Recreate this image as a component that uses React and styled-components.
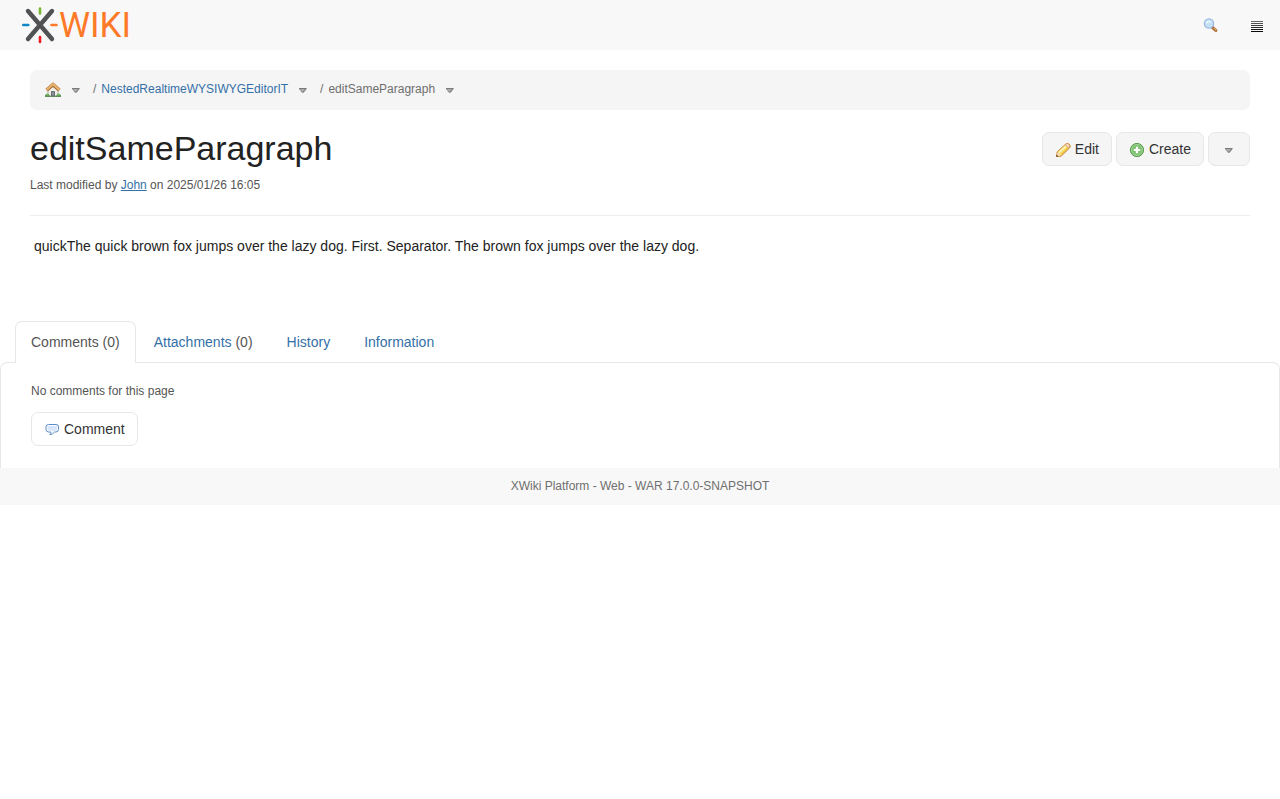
import React from "react";
import styled, { createGlobalStyle } from "styled-components";

const color = {
  bar: "#f8f8f8",
  button: "#f5f5f5",
  crumb: "#f5f5f5",
  border: "#e7e7e7",
  link: "#3470a8",
  muted: "#6f6f6f",
  soft: "#555",
  text: "#222",
};

const GlobalStyle = createGlobalStyle`
  *, *::before, *::after { box-sizing: border-box; }
  body {
    margin: 0;
    background: #fff;
    color: ${color.text};
    font: 14px/20px "Liberation Sans", Arial, sans-serif;
  }
`;

const Header = styled.header`
  display: flex;
  justify-content: space-between;
  height: 50px;
  background: ${color.bar};
`;
const LogoLink = styled.a`
  display: block;
  padding: 5px 20px;
  svg { display: block; }
`;
const HeaderActions = styled.nav`
  display: flex;
  gap: 4px;
  padding-right: 2px;
`;
const IconButton = styled.button`
  display: flex;
  align-items: center;
  justify-content: center;
  width: 42px;
  padding: 2px 0 0;
  border: 0;
  background: none;
  cursor: pointer;
`;

const Main = styled.main`
  padding: 20px 30px 0;
`;
const Breadcrumb = styled.ol`
  display: flex;
  align-items: center;
  gap: 13px;
  height: 40px;
  margin: 0;
  padding: 0 15px;
  list-style: none;
  border-radius: 7px;
  background: ${color.crumb};
  color: ${color.muted};
  font-size: 12px;
  line-height: 16px;
`;
const Crumb = styled.li`
  display: flex;
  align-items: center;
  gap: 11px;
`;
const CrumbText = styled.span`
  display: flex;
  gap: 5px;
  padding-bottom: 2px;
`;
const Link = styled.a`
  color: ${color.link};
  text-decoration: ${(p) => (p.$underline ? "underline" : "none")};
`;
const HomeLink = styled.a`
  display: flex;
`;
const CaretButton = styled.button`
  display: flex;
  padding: 1px 0 0;
  border: 0;
  background: none;
  cursor: pointer;
`;

const TitleRow = styled.div`
  display: flex;
  justify-content: space-between;
  align-items: flex-start;
  padding-top: 20px;
`;
const Title = styled.h1`
  margin: 0;
  font-size: 34px;
  font-weight: 400;
  line-height: 37px;
`;
const ButtonBar = styled.div`
  display: flex;
  gap: 4px;
  padding-top: 2px;
`;
const Button = styled.button`
  display: inline-flex;
  align-items: center;
  justify-content: center;
  gap: 4px;
  height: 34px;
  min-width: 42px;
  padding: 0 12px;
  border: 1px solid ${color.border};
  border-radius: 7px;
  background: ${(p) => (p.$plain ? "#fff" : color.button)};
  color: #333;
  font: inherit;
  cursor: pointer;
  svg { position: relative; top: 1px; }
`;
const Meta = styled.p`
  margin: 0;
  padding: 10px 0 21px;
  border-bottom: 1px solid #eee;
  color: ${color.soft};
  font-size: 12px;
  line-height: 17px;
`;
const Content = styled.article`
  min-height: 85px;
  margin-top: 20px;
  padding-left: 4px;
`;

const Tabs = styled.nav`
  display: flex;
  gap: 2px;
  padding: 0 15px;
`;
const Tab = styled.a`
  height: 42px;
  margin-bottom: -1px;
  padding: 10px 15px;
  border: 1px solid ${(p) => (p.$active ? color.border : "transparent")};
  border-bottom: 0;
  border-radius: 7px 7px 0 0;
  background: ${(p) => (p.$active ? "#fff" : "none")};
  color: ${(p) => (p.$active ? color.soft : color.link)};
  text-decoration: none;
  z-index: 1;
`;
const Count = styled.span`
  color: ${color.soft};
`;
const Pane = styled.section`
  padding: 20px 30px 22px;
  border: 1px solid ${color.border};
  border-bottom: 0;
  border-radius: 7px 7px 0 0;
`;
const Empty = styled.p`
  margin: 0 0 12px;
  color: ${color.soft};
  font-size: 12px;
  line-height: 17px;
`;
const Footer = styled.footer`
  padding: 10px 30px;
  background: ${color.bar};
  color: ${color.muted};
  font-size: 12px;
  line-height: 17px;
  text-align: center;
`;
const Wordmark = styled.text`
  font: 35px Roboto, "Liberation Sans", sans-serif;
  fill: #ff7a28;
`;

function Logo() {
  return (
    <svg width="116" height="40" viewBox="0 0 116 40" role="img" aria-label="XWiki">
      <g fill="none" strokeLinecap="round">
        <path d="M8 6 32 34M32 6 8 34" stroke="#515254" strokeWidth="4.4" />
        <g strokeWidth="2.6">
          <path d="M20 3.5v5" stroke="#78b833" />
          <path d="M20 32v5" stroke="#ee1c25" />
          <path d="M3.3 20h5" stroke="#1287c8" />
          <path d="M31.5 20h5" stroke="#ff7a28" />
        </g>
      </g>
      <Wordmark x="39" y="32">WIKI</Wordmark>
    </svg>
  );
}

function Caret() {
  return (
    <svg width="8" height="5" viewBox="0 0 8 5" aria-hidden="true">
      <path d="M0 0h7.400v1L4.500 4.800H2.900L0 1z" fill="#999" />
      <path d="M0 0h7.400v.9H0z" fill="#777" />
      <path d="m3.700 4.800 3.500-3.900" stroke="#7a7a7a" strokeWidth=".8" />
      <path d="M1.500 1h4L3.400 3.200z" fill="#b0b0b0" />
    </svg>
  );
}

function SearchIcon() {
  return (
    <svg width="16" height="16" viewBox="0 0 16 16" aria-hidden="true">
      <path d="m9.8 9.800 3 2.600" stroke="#a96d34" strokeWidth="3.2" strokeLinecap="round" />
      <path d="m11.2 10.400 1.700 1.500" stroke="#e2b06c" strokeWidth="1.2" strokeLinecap="round" />
      <circle cx="6" cy="5.500" r="4.7" fill="#c5dff5" stroke="#9bb9e2" strokeWidth="1.2" />
      <path d="M3 5.9a3 3 0 0 1 3-3.2c1.3 0 2.3.7 2.7 1.6-2 0-3.900.4-5.700 1.600z" fill="#e9f5fe" />
    </svg>
  );
}

function MenuIcon() {
  return (
    <svg width="12" height="11" viewBox="0 0 12 11" shapeRendering="crispEdges" aria-hidden="true">
      {["#666", "#505050", "#3c3c3c", "#292929", "#181818", "#080808"].map((fill, i) => (
        <rect key={fill} y={i * 2} width="12" height="1" fill={fill} />
      ))}
    </svg>
  );
}

function HomeIcon() {
  return (
    <svg width="16" height="16" viewBox="0 0 16 16" aria-hidden="true">
      <path d="M3 7.500 8 3l5 4.500V14H3z" fill="#f3efe9" stroke="#a79c8c" strokeWidth=".7" />
      <path d="M6.500 9.500h3V14h-3z" fill="#8b9299" stroke="#5a6168" strokeWidth=".9" />
      <path d="M1.600 8.100 8 2.600l6.400 5.500" fill="none" stroke="#a0682f" strokeWidth="3.600" />
      <path d="M1.500 7.800 8 2.200l6.500 5.600" fill="none" stroke="#e6b06d" strokeWidth="2.400" />
      <path d="M0 14.500v-1.300l1-.9 1-.9 1.500.3 1 1.500.5 1.300zM11 14.500l.5-1.300 1-1.500 1.500-.3 1 .9 1 .9v1.300z" fill="#57a04f" />
      <path d="M1.500 12.800h2M12.500 12.800h2" stroke="#93d17e" />
      <path d="M0 14.400h16" stroke="#557a4e" strokeWidth=".9" />
    </svg>
  );
}

function PencilIcon() {
  return (
    <svg width="16" height="16" viewBox="0 0 16 16" aria-hidden="true">
      <path d="m1.500 14.500.8-4.700 8.200-7.500q1.400-1.300 2.900-.6l1.600 1.500q.7 1.300-.4 2.700l-8.400 8.200z" fill="#f8dc62" stroke="#c67c34" strokeLinejoin="round" />
      <path d="m4 10.500 7-6.500" stroke="#fff3b4" strokeWidth="1.800" />
      <path d="m6.300 12.200 6.200-6" stroke="#ebb53a" />
      <path d="m10.400 2.700 1-.9q1-.7 2 .1l1 1q.7 1-.2 2.200l-1 1z" fill="#f5dac2" stroke="#d39263" strokeWidth=".7" />
      <path d="m1.900 14 .7-3.500q2.500.5 3 2.900z" fill="#f7dfbf" />
      <path d="M1.300 14.700l.4-2 1.600 1.500z" fill="#4b3020" />
    </svg>
  );
}

function AddIcon() {
  return (
    <svg width="16" height="16" viewBox="0 0 16 16" aria-hidden="true">
      <circle cx="8" cy="8" r="6.600" fill="#64ad57" stroke="#569b4c" />
      <circle cx="8" cy="8" r="5.500" fill="#7dc271" stroke="#b7dfaf" strokeWidth=".8" />
      <path d="M8 4.800v6.400M4.800 8h6.400" stroke="#fff" strokeWidth="2.200" />
    </svg>
  );
}

function CommentIcon() {
  return (
    <svg width="16" height="16" viewBox="0 0 16 16" aria-hidden="true">
      <path d="M4.500 2.500h7.500q2.500 0 2.500 2.500v2.500q0 2.300-2.500 2.500h-1.500Q9 12.300 5.800 12.800 7.300 11.300 6.800 10H4.500Q2 9.800 2 7.500V5q0-2.500 2.500-2.500z" fill="#fff" stroke="#5c8cc4" strokeLinejoin="round" />
      <path d="M4.500 4h7.500q1.200 0 1.200 1v2.200q0 1.500-1.500 1.500H9.500L8.200 10.300V8.700H4.800q-1.300 0-1.300-1.200V5q0-1 1-1z" fill="#d7e6fb" />
    </svg>
  );
}

const tabs = [
  { label: "Comments", count: 0, active: true },
  { label: "Attachments", count: 0 },
  { label: "History" },
  { label: "Information" },
];

export default function App() {
  return (
    <>
      <GlobalStyle />
      <Header>
        <LogoLink href="#home"><Logo /></LogoLink>
        <HeaderActions>
          <IconButton aria-label="Search"><SearchIcon /></IconButton>
          <IconButton aria-label="Menu"><MenuIcon /></IconButton>
        </HeaderActions>
      </Header>
      <Main>
        <Breadcrumb>
          <Crumb>
            <HomeLink href="#home" aria-label="Home"><HomeIcon /></HomeLink>
            <CaretButton aria-label="Home children"><Caret /></CaretButton>
          </Crumb>
          <Crumb>
            <CrumbText>
              <span>/</span>
              <Link href="#space">NestedRealtimeWYSIWYGEditorIT</Link>
            </CrumbText>
            <CaretButton aria-label="Space children"><Caret /></CaretButton>
          </Crumb>
          <Crumb>
            <CrumbText>
              <span>/</span>
              <span>editSameParagraph</span>
            </CrumbText>
            <CaretButton aria-label="Page children"><Caret /></CaretButton>
          </Crumb>
        </Breadcrumb>
        <TitleRow>
          <Title>editSameParagraph</Title>
          <ButtonBar>
            <Button><PencilIcon />Edit</Button>
            <Button><AddIcon />Create</Button>
            <Button aria-label="More actions"><Caret /></Button>
          </ButtonBar>
        </TitleRow>
        <Meta>
          Last modified by <Link href="#john" $underline>John</Link> on 2025/01/26 16:05
        </Meta>
        <Content>
          quickThe quick brown fox jumps over the lazy dog. First. Separator. The brown fox jumps over the lazy dog.
        </Content>
      </Main>
      <Tabs aria-label="Page extras">
        {tabs.map(({ label, count, active }) => (
          <Tab key={label} href={`#${label}`} $active={active}>
            {label}
            {count !== undefined && <Count> ({count})</Count>}
          </Tab>
        ))}
      </Tabs>
      <Pane>
        <Empty>No comments for this page</Empty>
        <Button $plain><CommentIcon />Comment</Button>
      </Pane>
      <Footer>XWiki Platform - Web - WAR 17.0.0-SNAPSHOT</Footer>
    </>
  );
}
